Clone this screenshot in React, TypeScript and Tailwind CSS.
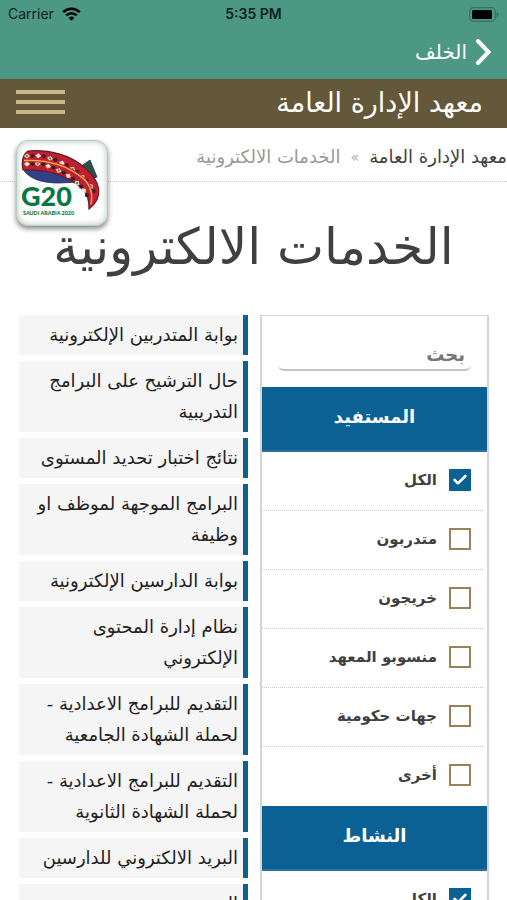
import { clsx } from 'clsx';
import { Check } from 'lucide-react';

const SERVICES = [
  'بوابة المتدربين الإلكترونية',
  'حال الترشيح على البرامج التدريبية',
  'نتائج اختبار تحديد المستوى',
  'البرامج الموجهة لموظف او وظيفة',
  'بوابة الدارسين الإلكترونية',
  'نظام إدارة المحتوى الإلكتروني',
  'التقديم للبرامج الاعدادية - لحملة الشهادة الجامعية',
  'التقديم للبرامج الاعدادية - لحملة الشهادة الثانوية',
  'البريد الالكتروني للدارسين',
  'المقترح تقني',
];

const FILTERS = [
  {
    title: 'المستفيد',
    options: ['الكل', 'متدربون', 'خريجون', 'منسوبو المعهد', 'جهات حكومية', 'أخرى'],
  },
  { title: 'النشاط', options: ['الكل'] },
];

function StatusBar() {
  return (
    <div dir="ltr" className="grid h-7 grid-cols-3 items-center px-2 font-['Inter',sans-serif] text-sm text-[#10211c]">
      <div className="flex items-center gap-2">
        Carrier
        <svg viewBox="0 0 19 14" className="h-3.5 w-[19px]" fill="none" stroke="#000" strokeWidth="2.6">
          <path d="M1.2 5.2a11.8 11.8 0 0 1 16.6 0" />
          <path d="M4.3 8.4a7.4 7.4 0 0 1 10.4 0" />
          <path d="M9.5 13.8 6.6 10.9a4.1 4.1 0 0 1 5.8 0Z" fill="#000" stroke="none" />
        </svg>
      </div>
      <div className="text-center font-semibold">5:35 PM</div>
      <svg viewBox="0 0 30 15" className="h-[15px] w-[30px] justify-self-end">
        <rect x="0.7" y="0.7" width="25.6" height="13.6" rx="3.8" fill="none" stroke="#2d7561" strokeWidth="1.2" />
        <rect x="3" y="3" width="20" height="9" rx="1.5" fill="#000" />
        <path d="M27.6 5c2.4.8 2.4 4.2 0 5Z" fill="#2d7561" />
      </svg>
    </div>
  );
}

// Motifs along the woven band: x, y, rotation
const MOTIFS = [
  [13, 19, 0],
  [24, 19, 4],
  [35, 22, 14],
  [46, 27, 24],
  [56, 33, 32],
  [65, 41, 42],
  [72, 50, 58],
];

function G20Logo() {
  return (
    <svg viewBox="0 0 90 84" className="h-[84px] w-[90px]" direction="ltr" role="img" aria-label="G20">
      <path d="m60 28 13-9 7 17-9 3Z" fill="#24544b" stroke="#1a3a3a" strokeWidth="0.8" />
      <path d="M6 19c0 5 0 9 2 12 8 9 22 11 34 11l22-1-10-7C38 26 20 22 6 19Z" fill="#2f4187" stroke="#222b58" strokeWidth="0.8" />
      <path
        d="M11 10C32 8 54 14 68 27c15 13 20 28 4 41 0-10-2-17-11-24C46 33 27 28 6 29c-2-8 0-16 5-19Z"
        fill="#bd2030"
        stroke="#6f1726"
        strokeWidth="1.2"
      />
      {MOTIFS.map(([x, y, angle], i) => (
        <g key={i} transform={`translate(${x} ${y}) rotate(${angle})`}>
          <path d="m-6-4 3-2.500 3 2.500-3 2.500ZM-6 4l3-2.500L0 4l-3 2.500Z" fill="#f3ead2" />
          <path d="m0-4 2.500-2.500L5-4 2.500-1.500ZM0 4l2.500-2.500L5 4 2.500 6.500Z" fill="#3a1c24" />
          <circle cx="-3" cy={i % 2 ? 4 : -4} r="1.200" fill="#4f8a55" />
        </g>
      ))}
      <path d="M7 19.500c22-1 43 5 58 17 9 7 11 16 9 27" fill="none" stroke="#cf2031" strokeWidth="3.200" />
      <path d="M7 19.500c22-1 43 5 58 17 9 7 11 16 9 27" fill="none" stroke="#ecb64d" strokeWidth="1.300" />
      <text x="4" y="65" fill="#087744" fontFamily="Lato, sans-serif" fontWeight="900" fontSize="27">
        G20
      </text>
      <text x="6" y="74" fill="#087744" fontFamily="Lato, sans-serif" fontWeight="900" fontSize="5.4">
        SAUDI ARABIA 2020
      </text>
    </svg>
  );
}

function FilterOption({ label, checked, last }: { label: string; checked: boolean; last: boolean }) {
  return (
    <div className={clsx('mr-1 pr-3', last ? 'pb-px' : 'border-b border-dotted border-[#c8c8c8]')}>
      <label className="flex h-[58px] items-center gap-3 pb-0.5 text-[15px] font-bold text-[#3f3f3f]">
        <span className="relative flex size-[22px] shrink-0">
          <input
            type="checkbox"
            defaultChecked={checked}
            className="peer size-[22px] appearance-none border-2 border-[#9b8158] bg-white checked:border-[#0b6193] checked:bg-[#0b6193]"
          />
          <Check
            strokeWidth={4}
            className="pointer-events-none absolute inset-[3px] hidden size-4 text-white peer-checked:block"
          />
        </span>
        {label}
      </label>
    </div>
  );
}

function Filters() {
  return (
    <aside className="min-w-0 border-x-2 border-t border-[#d5d5d5]">
      <div className="px-4 pt-6 pb-4">
        <input
          type="search"
          aria-label="بحث"
          placeholder="بحث"
          className="block h-[31px] w-full rounded-md border-b-2 border-[#c4c4c4] px-1.5 text-lg font-bold placeholder:text-[#777]"
        />
      </div>
      {FILTERS.map((group) => (
        <section key={group.title}>
          <h2 className="flex h-[65px] items-center justify-center border-b-2 border-[#2f70a0] bg-[#0b6193] pb-1 text-lg font-bold text-white">
            {group.title}
          </h2>
          {group.options.map((label, i) => (
            <FilterOption key={label} label={label} checked={i === 0} last={i === group.options.length - 1} />
          ))}
        </section>
      ))}
    </aside>
  );
}

export default function App() {
  return (
    <div dir="rtl" className="flex h-screen flex-col overflow-hidden bg-white font-['DejaVu_Sans',sans-serif]">
      <header className="shrink-0 bg-[#4d9883]">
        <StatusBar />
        <div className="flex h-[51px] items-center px-4 pb-1">
          <button type="button" className="flex items-center gap-2 text-xl text-white">
            <svg viewBox="0 0 16 28" className="h-7 w-4" fill="none" stroke="currentColor" strokeWidth="4">
              <path d="m3 3 10.500 11L3 25" strokeLinecap="round" />
            </svg>
            الخلف
          </button>
        </div>
      </header>

      <div className="flex h-[49px] shrink-0 items-center justify-between bg-[#635839] pr-6 pl-4">
        <span className="text-[27px] text-white">معهد الإدارة العامة</span>
        <button type="button" aria-label="القائمة" className="flex w-[49px] flex-col gap-1.5 pb-1">
          <span className="h-1 bg-[#c9b787]" />
          <span className="h-1 bg-[#c9b787]" />
          <span className="h-1 bg-[#c9b787]" />
        </button>
      </div>

      <main className="min-h-0 flex-1 overflow-y-auto [scrollbar-width:none]">
        <div className="relative">
          <nav className="flex h-[54px] items-center gap-2.5 border-b border-dotted border-[#c8c8c8] pt-1 text-lg">
            <a href="#home" className="text-[#3f3f3f]">معهد الإدارة العامة</a>
            <span className="text-sm text-[#aaa]">»</span>
            <span className="text-[#999]">الخدمات الالكترونية</span>
          </nav>
          <a
            href="#g20"
            className="absolute top-3 left-4 rounded-xl border border-[#b5ccc3] bg-white shadow-[0_3px_5px_rgba(0,0,0,0.45),inset_0_0_6px_rgba(90,130,115,0.5)]"
          >
            <G20Logo />
          </a>
        </div>

        <h1 className="h-[133px] pt-10 text-center text-[50px] leading-[50px] text-[#404040]">الخدمات الالكترونية</h1>

        <div className="grid grid-cols-2 items-start gap-3 pr-[18px] pl-[19px]">
          <Filters />
          <ul className="flex min-w-0 flex-col gap-1.5">
            {SERVICES.map((name) => (
              <li key={name}>
                <a
                  href="#service"
                  className="block border-r-[5px] border-[#0b6193] bg-[#f5f5f5] pt-1 pr-[5px] pb-[5px] pl-2 text-lg leading-[31px] text-[#222]"
                >
                  {name}
                </a>
              </li>
            ))}
          </ul>
        </div>
      </main>
    </div>
  );
}
